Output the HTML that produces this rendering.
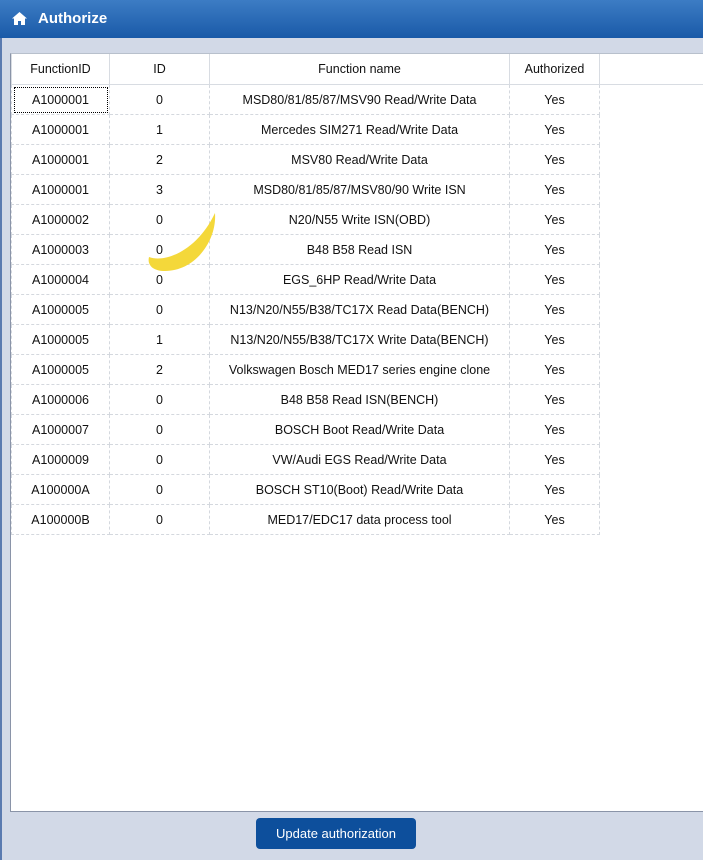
<!DOCTYPE html>
<html><head><style>
body{margin:0;width:703px;height:860px;background:#d2d9e7;font-family:"Liberation Sans",sans-serif;position:relative;overflow:hidden}
.hd{position:absolute;left:0;top:0;width:703px;height:38px;background:linear-gradient(180deg,#3c7cc4,#1a5aa8);color:#fff;font-weight:bold;font-size:15px}
.hd span{position:absolute;left:38px;top:10px}
.panel{position:absolute;left:10px;top:53px;width:693px;height:757px;background:#fff;border-left:1px solid #8a94a8;border-bottom:1px solid #8a94a8;border-top:1px solid #b8c0cc}
table{border-collapse:collapse;font-size:12.5px;color:#111;table-layout:fixed;width:588px}
td,th{height:29px;text-align:center;border:1px dashed #d4d8de;padding:0}
th{font-weight:normal;height:30px;border:1px solid #d8dce2;border-top:none}
.btn{position:absolute;left:256px;top:818px;width:160px;height:31px;background:#0d4f9c;border-radius:4px;color:#fff;font-size:13px;text-align:center;line-height:31px}
.lft{position:absolute;left:0;top:38px;width:2px;height:822px;background:#5a7bb0}
</style></head><body>
<div class="hd"><svg style="position:absolute;left:12px;top:12px" width="15" height="13" viewBox="0 0 15 13"><path d="M7.5 0L0 6.5h2V13h4V9h3v4h4V6.5h2z" fill="#fff"/></svg><span>Authorize</span></div>
<div class="lft"></div>
<div class="panel">
<table>
<colgroup><col style="width:98px"><col style="width:100px"><col style="width:300px"><col style="width:90px"></colgroup>
<tr><th>FunctionID</th><th>ID</th><th>Function name</th><th>Authorized</th></tr>
<tr><td style="outline:1px dotted #000;outline-offset:-3px">A1000001</td><td>0</td><td>MSD80/81/85/87/MSV90 Read/Write Data</td><td>Yes</td></tr>
<tr><td>A1000001</td><td>1</td><td>Mercedes SIM271 Read/Write Data</td><td>Yes</td></tr>
<tr><td>A1000001</td><td>2</td><td>MSV80 Read/Write Data</td><td>Yes</td></tr>
<tr><td>A1000001</td><td>3</td><td>MSD80/81/85/87/MSV80/90 Write ISN</td><td>Yes</td></tr>
<tr><td>A1000002</td><td>0</td><td>N20/N55 Write ISN(OBD)</td><td>Yes</td></tr>
<tr><td>A1000003</td><td>0</td><td>B48 B58 Read ISN</td><td>Yes</td></tr>
<tr><td>A1000004</td><td>0</td><td>EGS_6HP Read/Write Data</td><td>Yes</td></tr>
<tr><td>A1000005</td><td>0</td><td>N13/N20/N55/B38/TC17X Read Data(BENCH)</td><td>Yes</td></tr>
<tr><td>A1000005</td><td>1</td><td>N13/N20/N55/B38/TC17X Write Data(BENCH)</td><td>Yes</td></tr>
<tr><td>A1000005</td><td>2</td><td>Volkswagen Bosch MED17 series engine clone</td><td>Yes</td></tr>
<tr><td>A1000006</td><td>0</td><td>B48 B58 Read ISN(BENCH)</td><td>Yes</td></tr>
<tr><td>A1000007</td><td>0</td><td>BOSCH Boot Read/Write Data</td><td>Yes</td></tr>
<tr><td>A1000009</td><td>0</td><td>VW/Audi EGS Read/Write Data</td><td>Yes</td></tr>
<tr><td>A100000A</td><td>0</td><td>BOSCH ST10(Boot) Read/Write Data</td><td>Yes</td></tr>
<tr><td>A100000B</td><td>0</td><td>MED17/EDC17 data process tool</td><td>Yes</td></tr>
</table>
<div style="position:absolute;left:588px;top:0;width:105px;height:30px;border-bottom:1px solid #d8dce2"></div>
<svg style="position:absolute;left:134px;top:157px" width="80" height="64"><path d="M70 2C72 30 50 60 20 60C8 60 2 54 4 46C20 52 52 40 70 2z" fill="#f4d83a"/></svg>
</div>
<div class="btn">Update authorization</div>
</body></html>
